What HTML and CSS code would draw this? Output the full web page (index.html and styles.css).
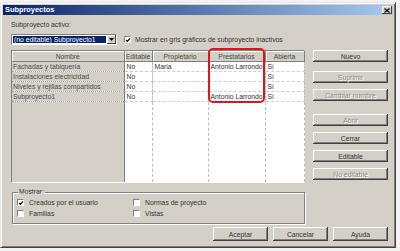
FILE: index.html
```html
<!DOCTYPE html>
<html lang="es">
<head>
  <meta charset="UTF-8" />
  <title>Subproyectos</title>
  <link rel="stylesheet" href="styles.css">
</head>
<body>
  <div class="window">
    <div class="titlebar">
      <span class="title">Subproyectos</span>
      <span class="close">
        <svg width="6" height="5" viewBox="0 0 6 5"><path d="M0.5 0.5 L5.5 4.5 M5.5 0.5 L0.5 4.5" stroke="#000" stroke-width="1.1"/></svg>
      </span>
    </div>

    <div class="content">
      <div class="label">Subproyecto activo:</div>

      <div class="combo-row">
        <div class="combo">
          <span class="combo-value">(no editable) Subproyecto1</span>
          <span class="combo-btn">
            <svg width="5" height="3" viewBox="0 0 5 3"><path d="M0 0 H5 L2.5 3 Z" fill="#000"/></svg>
          </span>
        </div>
        <div class="check check-top">
          <span class="box"><svg width="6" height="6" viewBox="0 0 6 6"><path d="M1 2.8 L2.4 4.3 L5 1.3" fill="none" stroke="#000" stroke-width="1.2"/></svg></span>
          Mostrar en gris gráficos de subproyecto inactivos
        </div>
      </div>

      <div class="main">
        <div class="left">
          <div class="grid-wrap">
            <table class="grid">
              <colgroup>
                <col class="c-nombre"><col class="c-edit"><col class="c-prop"><col class="c-prest"><col class="c-abierta">
              </colgroup>
              <thead>
                <tr>
                  <th>Nombre</th><th>Editable</th><th>Propietario</th><th>Prestatarios</th><th>Abierta</th>
                </tr>
              </thead>
              <tbody>
                <tr><td class="name">Fachadas y tabiquería</td><td>No</td><td>Maria</td><td>Antonio Larrondo</td><td>Sí</td></tr>
                <tr><td class="name">Instalaciones electricidad</td><td>No</td><td></td><td></td><td>Sí</td></tr>
                <tr><td class="name">Niveles y rejillas compartidos</td><td>No</td><td></td><td></td><td>Sí</td></tr>
                <tr><td class="name">Subproyecto1</td><td>No</td><td></td><td>Antonio Larrondo</td><td>Sí</td></tr>
                <tr class="filler"><td class="name"></td><td></td><td></td><td></td><td></td></tr>
              </tbody>
            </table>
            <div class="highlight"></div>
          </div>

          <fieldset class="group">
            <legend>Mostrar:</legend>
            <div class="group-grid">
              <div class="check"><span class="box"><svg width="6" height="6" viewBox="0 0 6 6"><path d="M1 2.8 L2.4 4.3 L5 1.3" fill="none" stroke="#000" stroke-width="1.2"/></svg></span>Creados por el usuario</div>
              <div class="check"><span class="box"></span>Normas de proyecto</div>
              <div class="check"><span class="box"></span>Familias</div>
              <div class="check"><span class="box"></span>Vistas</div>
            </div>
          </fieldset>
        </div>

        <div class="side">
          <button class="btn">Nuevo</button>
          <button class="btn disabled sep-sm">Suprimir</button>
          <button class="btn disabled">Cambiar nombre</button>
          <button class="btn disabled sep-lg">Abrir</button>
          <button class="btn">Cerrar</button>
          <button class="btn">Editable</button>
          <button class="btn disabled">No editable</button>
        </div>
      </div>

      <div class="footer">
        <button class="btn btn-foot">Aceptar</button>
        <button class="btn btn-foot">Cancelar</button>
        <button class="btn btn-foot">Ayuda</button>
      </div>
    </div>
  </div>
</body>
</html>
```

FILE: styles.css
```css
body {
  margin: 0;
  background: #f3f3f3;
  font-family: 'Liberation Sans', Arial, sans-serif;
  font-size: 6.8px;
  color: #333;
}

.window {
  box-sizing: border-box;
  width: 396px;
  height: 246px;
  margin-top: 2px;
  padding: 2px;
  background: #d4d0c8;
  border: 1px solid;
  border-color: #e8e6e0 #404040 #404040 #e8e6e0;
  box-shadow: inset 1px 1px #fff, inset -1px -1px #808080;
  display: flex;
  flex-direction: column;
}

.titlebar {
  height: 10px;
  padding: 0 1px 0 2px;
  background: linear-gradient(to right, #0a246a, #a6caf0);
  display: flex;
  align-items: center;
  justify-content: space-between;
}

.title {
  color: #fff;
  font-weight: bold;
  font-size: 7.4px;
  line-height: 10px;
}

.close {
  width: 10px;
  height: 8px;
  box-sizing: border-box;
  background: #d4d0c8;
  box-shadow: inset -1px -1px #404040, inset 1px 1px #fff;
  display: flex;
  align-items: center;
  justify-content: center;
}

.content {
  flex: 1;
  padding: 5px 5px 0 8px;
  display: flex;
  flex-direction: column;
}

.label {
  line-height: 9px;
  height: 9px;
}

.combo-row {
  margin-top: 5px;
  height: 11px;
  display: flex;
  align-items: center;
}

.combo {
  box-sizing: border-box;
  width: 106px;
  height: 11px;
  padding: 1px;
  background: #fff;
  border: 1px solid;
  border-color: #808080 #fff #fff #808080;
  display: flex;
}

.combo-value {
  flex: 1;
  margin-right: 1px;
  padding-left: 1px;
  background: #0a246a;
  color: #fff;
  line-height: 7px;
  white-space: nowrap;
}

.combo-btn {
  width: 9px;
  margin: -1px -1px -1px 0;
  background: #d4d0c8;
  box-shadow: inset -1px -1px #404040, inset 1px 1px #fff;
  display: flex;
  align-items: center;
  justify-content: center;
}

.check {
  display: flex;
  align-items: center;
  white-space: nowrap;
  line-height: 11px;
}

.check-top {
  margin-left: 7px;
}

.box {
  box-sizing: border-box;
  width: 7px;
  height: 7px;
  margin-right: 4px;
  background: #fff;
  border: 1px solid;
  border-color: #808080 #fff #fff #808080;
  display: flex;
  align-items: center;
  justify-content: center;
}

.box svg {
  flex: none;
}

.main {
  margin-top: 5px;
  display: flex;
  gap: 8px;
}

.left {
  width: 294px;
  display: flex;
  flex-direction: column;
}

.grid-wrap {
  position: relative;
  height: 133px;
  box-sizing: border-box;
  border: 1px solid;
  border-color: #808080 #fff #fff #808080;
  background: #fff;
}

.grid {
  width: 292px;
  height: 131px;
  table-layout: fixed;
  border-collapse: collapse;
}

.c-nombre { width: 112px; }
.c-edit { width: 28px; }
.c-prop { width: 56px; }
.c-prest { width: 57px; }
.c-abierta { width: 39px; }

.grid th {
  height: 10px;
  padding: 0;
  font-weight: normal;
  text-align: center;
  background: #d4d0c8;
  border-right: 1px solid #808080;
  border-bottom: 1px solid #808080;
  box-shadow: inset 1px 1px #fff;
  color: #444;
}

.grid td {
  height: 9px;
  padding: 0 0 0 2px;
  line-height: 9px;
  white-space: nowrap;
  overflow: hidden;
  border-right: 1px dashed #bdbdbd;
  border-bottom: 1px dashed #cfcfcf;
}

.grid td.name {
  padding-left: 1px;
  background: #d4d0c8;
  color: #4a4a4a;
  border-right: 1px solid #808080;
  border-bottom: 1px dotted #a0a0a0;
}

.grid .filler td {
  height: auto;
  border-bottom: none;
}

.highlight {
  position: absolute;
  left: 196px;
  top: -3px;
  width: 53px;
  height: 51px;
  border: 2px solid #e0151b;
  border-radius: 5px;
}

.group {
  margin: 5px 0 0 1px;
  padding: 1px 4px 4px 4px;
  border: 1px solid #808080;
  box-shadow: 1px 1px #fff, inset 1px 1px #fff;
  min-width: 0;
}

.group legend {
  padding: 0 1px;
  margin-left: 1px;
  line-height: 8px;
}

.group-grid {
  display: grid;
  grid-template-columns: 116px auto;
}

.group .box {
  margin-right: 5px;
}

.side {
  width: 75px;
  display: flex;
  flex-direction: column;
  gap: 6px;
}

.btn {
  box-sizing: border-box;
  height: 12px;
  padding: 0;
  font-family: inherit;
  font-size: 6.8px;
  color: #333;
  background: #d4d0c8;
  border: none;
  box-shadow: inset -1px -1px #404040, inset 1px 1px #fff, inset -2px -2px #808080;
}

.btn.disabled {
  color: #8a8a8a;
  text-shadow: 1px 1px 0 #fff;
}

.sep-sm {
  margin-top: 3px;
}

.sep-lg {
  margin-top: 7px;
}

.footer {
  margin-top: 3px;
  display: flex;
  justify-content: flex-end;
  gap: 5px;
}

.btn-foot {
  width: 55px;
  height: 14px;
}
```
